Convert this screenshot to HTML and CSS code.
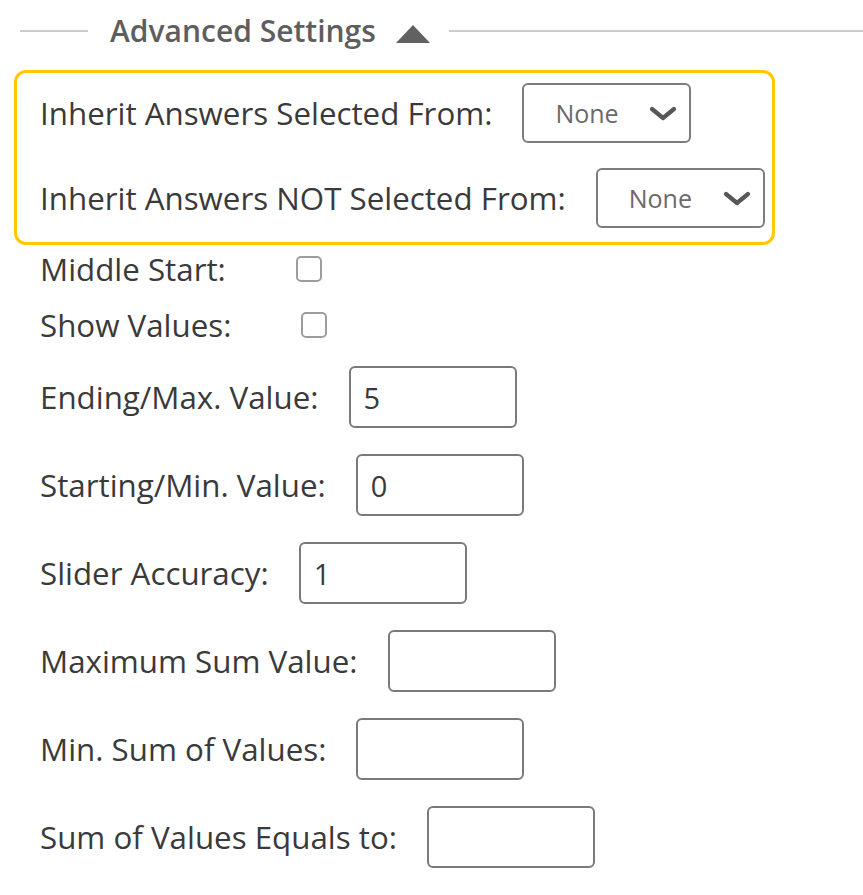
FILE: index.html
```html
<!DOCTYPE html>
<html lang="en">
<head>
<meta charset="utf-8">
<title>Advanced Settings</title>
<link rel="stylesheet" href="styles.css">
</head>
<body>
<div class="page">
  <div class="section-header">
    <span class="rule rule-left"></span>
    <span class="section-title">Advanced Settings</span>
    <svg class="caret" width="34" height="18" viewBox="0 0 34 18" aria-hidden="true"><polygon points="17,0 34,18 0,18" fill="#616161"/></svg>
    <span class="rule rule-right"></span>
  </div>

  <div class="inherit-box">
    <div class="field-row">
      <label class="field-label">Inherit Answers Selected From:</label>
      <div class="select-box">
        <span class="select-value">None</span>
        <svg class="chevron" width="28" height="15" viewBox="0 0 28 15" aria-hidden="true"><path d="M3 3 L14 12 L25 3" fill="none" stroke="#575757" stroke-width="4.2" stroke-linecap="round" stroke-linejoin="round"/></svg>
      </div>
    </div>
    <div class="field-row">
      <label class="field-label">Inherit Answers NOT Selected From:</label>
      <div class="select-box">
        <span class="select-value">None</span>
        <svg class="chevron" width="28" height="15" viewBox="0 0 28 15" aria-hidden="true"><path d="M3 3 L14 12 L25 3" fill="none" stroke="#575757" stroke-width="4.2" stroke-linecap="round" stroke-linejoin="round"/></svg>
      </div>
    </div>
  </div>

  <div class="fields">
    <div class="field-row check-row">
      <label class="field-label">Middle Start:</label>
      <input class="checkbox" type="checkbox">
    </div>
    <div class="field-row check-row">
      <label class="field-label">Show Values:</label>
      <input class="checkbox" type="checkbox">
    </div>
    <div class="field-row">
      <label class="field-label">Ending/Max. Value:</label>
      <input class="text-input" type="text" value="5">
    </div>
    <div class="field-row">
      <label class="field-label">Starting/Min. Value:</label>
      <input class="text-input" type="text" value="0">
    </div>
    <div class="field-row">
      <label class="field-label">Slider Accuracy:</label>
      <input class="text-input" type="text" value="1">
    </div>
    <div class="field-row">
      <label class="field-label">Maximum Sum Value:</label>
      <input class="text-input" type="text" value="">
    </div>
    <div class="field-row">
      <label class="field-label">Min. Sum of Values:</label>
      <input class="text-input" type="text" value="">
    </div>
    <div class="field-row">
      <label class="field-label">Sum of Values Equals to:</label>
      <input class="text-input" type="text" value="">
    </div>
  </div>
</div>
</body>
</html>
```

FILE: styles.css
```css
* {
  box-sizing: border-box;
}

html, body {
  margin: 0;
  padding: 0;
  background: #ffffff;
}

body {
  font-family: "Open Sans", "Noto Sans", "Liberation Sans", sans-serif;
  color: #3a3a3a;
}

.page {
  padding: 11px 0 0 14px;
}

.section-header {
  display: flex;
  align-items: center;
  height: 40px;
  margin-left: 6px;
}

.rule {
  height: 2px;
  background: #cccccc;
}

.rule-left {
  width: 68px;
  margin-right: 22px;
}

.rule-right {
  flex: 1;
  margin-left: 19px;
}

.section-title {
  font-size: 30px;
  font-weight: 600;
  color: #5e5e5e;
  line-height: 40px;
}

.caret {
  margin-left: 20px;
  margin-top: 6px;
  flex: none;
}

.inherit-box {
  width: 761px;
  margin-top: 19px;
  border: 3px solid #ffc800;
  border-radius: 12px;
  padding: 10px 0 14px 23px;
  display: flex;
  flex-direction: column;
  gap: 25px;
}

.field-row {
  display: flex;
  align-items: center;
  gap: 30px;
}

.field-label {
  font-size: 31.3px;
  color: #3a3a3a;
  white-space: nowrap;
}

.select-box {
  width: 169px;
  height: 60px;
  border: 2px solid #7d7d7d;
  border-radius: 6px;
  display: flex;
  align-items: center;
  justify-content: space-between;
  padding: 0 12px 0 31px;
}

.select-value {
  font-size: 25px;
  color: #6a6a6a;
}

.chevron {
  flex: none;
}

.fields {
  margin-top: 9px;
  padding-left: 26px;
  display: flex;
  flex-direction: column;
  gap: 26px;
}

.check-row {
  height: 30px;
  gap: 70px;
}

.checkbox {
  appearance: none;
  -webkit-appearance: none;
  margin: 0;
  width: 26px;
  height: 26px;
  border: 2px solid #9d9d9d;
  border-radius: 5px;
  background: #ffffff;
}

.text-input {
  width: 168px;
  height: 62px;
  margin: 0;
  border: 2px solid #7a7a7a;
  border-radius: 6px;
  padding: 0 0 0 13px;
  font-family: "Open Sans", "Noto Sans", "Liberation Sans", sans-serif;
  font-size: 29px;
  color: #3a3a3a;
  background: #ffffff;
  outline: none;
}
```
